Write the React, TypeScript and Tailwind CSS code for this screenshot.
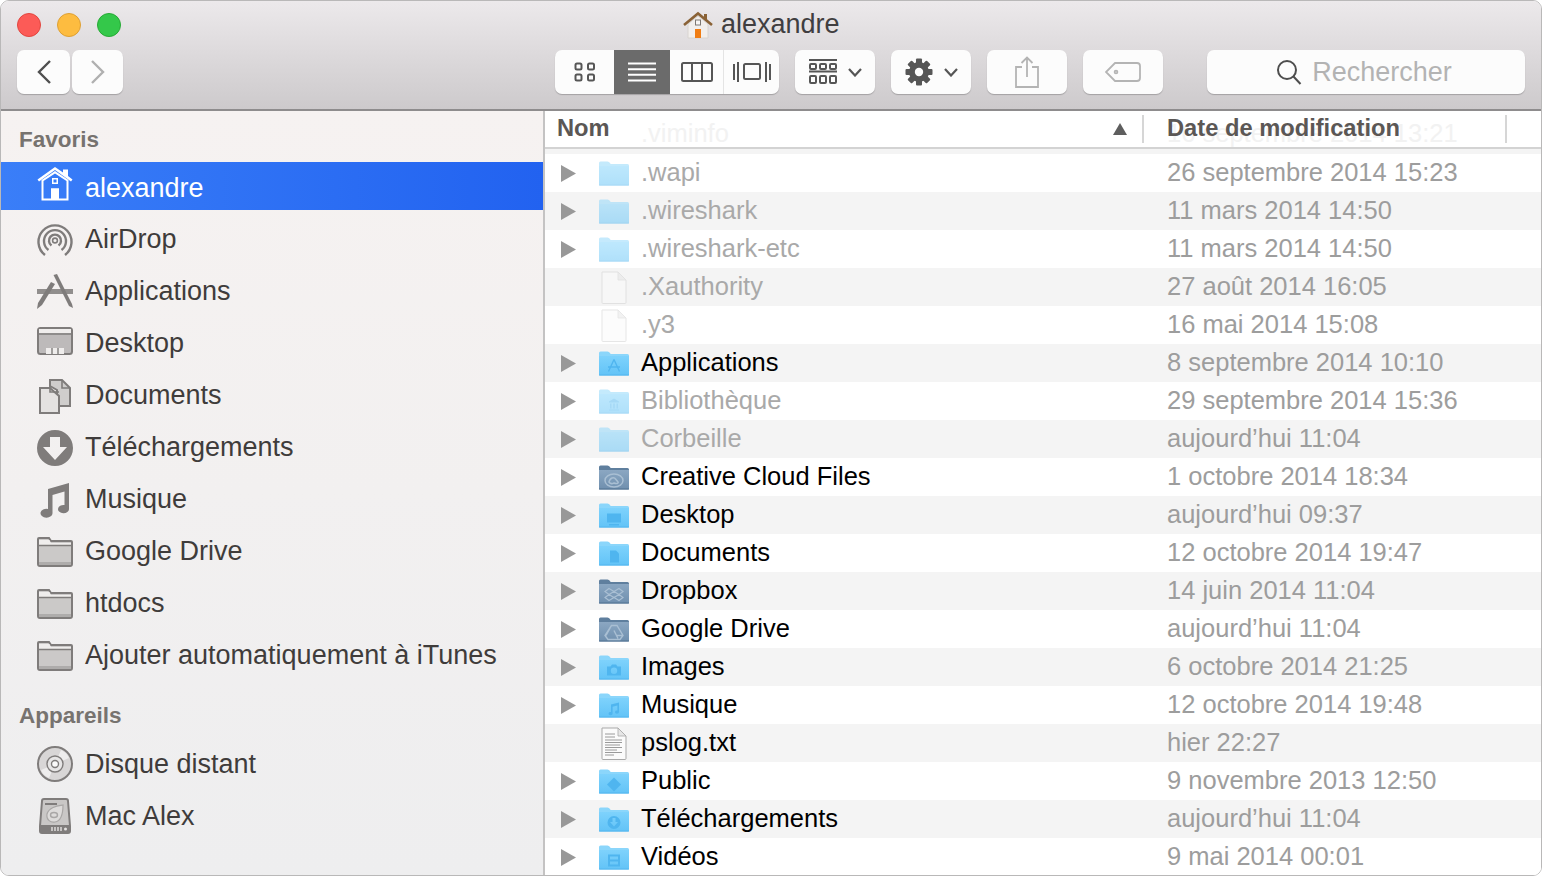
import { useId, type ReactNode } from "react";

const FONT = "font-['Liberation_Sans',Arial,sans-serif]";
const GRAY = "#7f7c7b";

type Glyph = "apps" | "library" | "cloud" | "desktop" | "doc" | "dropbox" | "drive" | "camera" | "music" | "public" | "download" | "film";

type Row = {
  name: string;
  date: string;
  icon: "folder" | "slate" | "file" | "text";
  glyph?: Glyph;
  faded?: boolean;
  noArrow?: boolean;
};

const rows: Row[] = [
  { name: ".wapi", date: "26 septembre 2014 15:23", icon: "folder", faded: true },
  { name: ".wireshark", date: "11 mars 2014 14:50", icon: "folder", faded: true },
  { name: ".wireshark-etc", date: "11 mars 2014 14:50", icon: "folder", faded: true },
  { name: ".Xauthority", date: "27 août 2014 16:05", icon: "file", faded: true, noArrow: true },
  { name: ".y3", date: "16 mai 2014 15:08", icon: "file", faded: true, noArrow: true },
  { name: "Applications", date: "8 septembre 2014 10:10", icon: "folder", glyph: "apps" },
  { name: "Bibliothèque", date: "29 septembre 2014 15:36", icon: "folder", glyph: "library", faded: true },
  { name: "Corbeille", date: "aujourd’hui 11:04", icon: "folder", faded: true },
  { name: "Creative Cloud Files", date: "1 octobre 2014 18:34", icon: "slate", glyph: "cloud" },
  { name: "Desktop", date: "aujourd’hui 09:37", icon: "folder", glyph: "desktop" },
  { name: "Documents", date: "12 octobre 2014 19:47", icon: "folder", glyph: "doc" },
  { name: "Dropbox", date: "14 juin 2014 11:04", icon: "slate", glyph: "dropbox" },
  { name: "Google Drive", date: "aujourd’hui 11:04", icon: "slate", glyph: "drive" },
  { name: "Images", date: "6 octobre 2014 21:25", icon: "folder", glyph: "camera" },
  { name: "Musique", date: "12 octobre 2014 19:48", icon: "folder", glyph: "music" },
  { name: "pslog.txt", date: "hier 22:27", icon: "text", noArrow: true },
  { name: "Public", date: "9 novembre 2013 12:50", icon: "folder", glyph: "public" },
  { name: "Téléchargements", date: "aujourd’hui 11:04", icon: "folder", glyph: "download" },
  { name: "Vidéos", date: "9 mai 2014 00:01", icon: "folder", glyph: "film" },
];

function FolderGlyph({ glyph, c }: { glyph: Glyph; c: string }) {
  switch (glyph) {
    case "apps":
      return <path d="M15 8 L9.5 20 M15 8 L20.5 20 M9 15.5 H21" stroke={c} strokeWidth="1.4" fill="none" />;
    case "library":
      return <path d="M10 12 L15 9 L20 12 V13 H10 Z M11 14 H12.5 V19 H11 Z M14.2 14 H15.8 V19 H14.2 Z M17.5 14 H19 V19 H17.5 Z M10 20 H20 V21 H10 Z" fill={c} />;
    case "cloud":
      return (
        <g fill="none" stroke={c} strokeWidth="1.5">
          <ellipse cx="15" cy="15" rx="9" ry="6.5" />
          <path d="M10 16.5 C11 12 15 11 17 14 L19 16.5 C20 18 17 18.5 15 17.5 C13 18.5 11 18 10 16.5 Z" />
        </g>
      );
    case "desktop":
      return <path d="M8 10 H22 V19 H8 Z M10 20.5 H20 V22 H10 Z" fill={c} />;
    case "doc":
      return <path d="M11 9 H17 L20 12 V21 H11 Z" fill={c} />;
    case "dropbox":
      return <path d="M10 9 L15 12 L10 15 L15 18 L20 15 L15 12 L20 9 L24 12 L20 15 L24 18 L20 21 L15 18 L10 21 L6 18 L10 15 L6 12 Z" fill="none" stroke={c} strokeWidth="1.2" />;
    case "drive":
      return <path d="M12.5 8 H18 L24 18 L21 22 H9 L6 18 Z M12.5 8 L7 18 M18 18 H24 M15 13 L19 21" fill="none" stroke={c} strokeWidth="1.4" />;
    case "camera":
      return <path fillRule="evenodd" d="M8 11 H11.5 L13 9 H17 L18.5 11 H22 V20 H8 Z M15 12 A3.2 3.2 0 1 0 15 18.4 A3.2 3.2 0 1 0 15 12 Z" fill={c} />;
    case "music":
      return <path d="M12 11 L20 9 V18.5 A2 1.6 0 1 1 18.4 17 V12 L13.6 13.2 V20 A2 1.6 0 1 1 12 18.5 Z" fill={c} />;
    case "public":
      return <path d="M15 8 L22 15 L15 22 L8 15 Z" fill={c} />;
    case "download":
      return <path fillRule="evenodd" d="M15 8.5 A6.5 6.5 0 1 0 15 21.5 A6.5 6.5 0 1 0 15 8.5 Z M13.5 10.5 H16.5 V14.5 H19 L15 19 L11 14.5 H13.5 Z" fill={c} />;
    case "film":
      return <path fillRule="evenodd" d="M9 9 H21 V21 H9 Z M11 11 V14 H19 V11 Z M11 16 V19 H19 V16 Z" fill={c} />;
  }
}

function Folder({ slate, glyph }: { slate?: boolean; glyph?: Glyph }) {
  const id = useId();
  const top = slate ? "#8ba7c2" : "#7ed2fc";
  const bottom = slate ? "#6f8fae" : "#62c3f7";
  const tab = slate ? "#5f7f9e" : "#8bd6fb";
  const edge = slate ? "#51708f" : "#55b6ee";
  return (
    <svg width="32" height="25" viewBox="0 0 32 25" className="block">
      <defs>
        <linearGradient id={id} x1="0" y1="0" x2="0" y2="1">
          <stop offset="0" stopColor={top} />
          <stop offset="1" stopColor={bottom} />
        </linearGradient>
      </defs>
      <path d="M1 24 V2 Q1 0.5 2.5 0.5 H9.5 Q11 0.5 12 2 L12.6 3 H29.5 Q31 3 31 4.5 V24 Z" fill={tab} />
      <path d="M1 5 H31 V23.5 Q31 24.5 30 24.5 H2 Q1 24.5 1 23.5 Z" fill={`url(#${id})`} />
      <path d="M1 24 H31" stroke={edge} strokeWidth="1" />
      <g transform="translate(1 0.5)">
        {glyph && <FolderGlyph glyph={glyph} c={slate ? "#a9bfd3" : "#4fb5ef"} />}
      </g>
    </svg>
  );
}

function FileIcon({ text }: { text?: boolean }) {
  return (
    <svg width="26" height="33" viewBox="0 0 26 33" className="block">
      <path d="M1 1 H17 L25 9 V31.5 Q25 32.5 24 32.5 H2 Q1 32.5 1 31.5 Z" fill="#fbfbfb" stroke={text ? "#a9a9a9" : "#cfcfcf"} />
      <path d="M17 1 V9 H25 Z" fill="#e6e6e6" stroke={text ? "#a9a9a9" : "#cfcfcf"} strokeWidth="0.8" />
      {text && (
        <path
          d="M4 7 H14 M4 10 H14 M4 13 H21 M4 15.5 H21 M4 18 H19 M4 20.5 H21 M4 23 H16 M4 25.5 H21 M4 28 H13"
          stroke="#9a9a9a"
          strokeWidth="1"
        />
      )}
    </svg>
  );
}

function RowIcon({ row }: { row: Row }) {
  if (row.icon === "folder") return <Folder glyph={row.glyph} />;
  if (row.icon === "slate") return <Folder slate glyph={row.glyph} />;
  return (
    <div className="pl-[3px]">
      <FileIcon text={row.icon === "text"} />
    </div>
  );
}

function HomeIcon() {
  return (
    <svg width="36" height="36" viewBox="0 0 36 36" className="block">
      <path d="M0.5 13.5 L18 1 L26 6.5 V3.5 H31 V10 L35.5 13.5 L34 15.5 L18 4 L2 15.5 Z" fill="#fff" />
      <path fillRule="evenodd" d="M4.5 14 L18 5 L31.5 14 V34.5 H4.5 Z M6.5 15 V32.5 H14 V22.5 H22 V32.5 H29.5 V15 L18 7.5 Z M15 12 V18 H21 V12 Z M16.5 13.5 H19.5 V16.5 H16.5 Z" fill="#fff" />
      <rect x="14" y="22.5" width="8" height="11" fill="#fff" />
    </svg>
  );
}

function SideIcon({ kind }: { kind: string }) {
  const common = { width: 36, height: 36, viewBox: "0 0 36 36", className: "block" };
  switch (kind) {
    case "airdrop":
      return (
        <svg {...common}>
          <g fill="none" stroke={GRAY} strokeWidth="2.4">
            <path d="M8 33 A16.5 16.5 0 1 1 28 33" />
            <path d="M11.5 28 A11 11 0 1 1 24.5 28" />
            <path d="M14.5 23.5 A6 6 0 1 1 21.5 23.5" />
          </g>
          <circle cx="18" cy="18.5" r="2.4" fill="none" stroke={GRAY} strokeWidth="1.6" />
        </svg>
      );
    case "apps":
      return (
        <svg {...common}>
          <rect x="0" y="15" width="36" height="5" fill={GRAY} opacity="0.85" />
          <path d="M16.5 1 L20 0 L35 30 L36 34 L32 32 Z" fill={GRAY} />
          <path d="M14 8 L18 10 L5 31 L0 35 L1 29 Z" fill={GRAY} />
        </svg>
      );
    case "desktop":
      return (
        <svg {...common}>
          <rect x="1" y="2" width="34" height="26" rx="2.5" fill="#bdbaba" stroke={GRAY} strokeWidth="2" />
          <rect x="2" y="3" width="32" height="4" fill="#efedec" />
          <path d="M1 8 H35" stroke={GRAY} strokeWidth="1.5" />
          <rect x="9" y="22" width="18" height="6" fill="#efedec" />
          <path d="M15 22 V28 M21 22 V28" stroke={GRAY} strokeWidth="1.4" />
        </svg>
      );
    case "docs":
      return (
        <svg {...common}>
          <path d="M13 2 H25 L33 10 V28 H20 V12 L13 8 Z" fill="#cfcdcc" stroke={GRAY} strokeWidth="2" />
          <path d="M3 10 H13 L22 18 V35 H3 Z" fill="#e4e2e1" stroke={GRAY} strokeWidth="2" />
          <path d="M13 3 V14 H22 M25 2 V10 H33" fill="none" stroke={GRAY} strokeWidth="1.6" />
        </svg>
      );
    case "download":
      return (
        <svg {...common}>
          <path fillRule="evenodd" d="M18 0 A18 18 0 1 0 18 36 A18 18 0 1 0 18 0 Z M13 7 H23 V17 H30 L18 30 L6 17 H13 Z" fill={GRAY} />
        </svg>
      );
    case "music":
      return (
        <svg {...common}>
          <path d="M11 7 L32 1 V27 A5.5 4.2 0 1 1 27.5 23 V9.5 L15.5 13 V31 A6 4.4 0 1 1 11 27 Z" fill={GRAY} />
        </svg>
      );
    case "folder":
      return (
        <svg {...common}>
          <path d="M1 30 V5 Q1 4 2 4 H12 L14 7 H34 Q35 7 35 8 V30 Q35 32 33 32 H3 Q1 32 1 30 Z" fill="#cbc9c8" stroke={GRAY} strokeWidth="2" />
          <path d="M2 6 H12.5 L14 9 H34 V11 H2 Z" fill="#efedec" />
          <path d="M2 11.5 H34" stroke={GRAY} strokeWidth="1.5" />
          <rect x="2" y="28" width="32" height="3" fill="#aeacab" />
        </svg>
      );
    case "disc":
      return (
        <svg {...common}>
          <circle cx="18" cy="18" r="17" fill="#d8d6d6" stroke={GRAY} strokeWidth="2" />
          <path d="M18 18 L24 4 A15 15 0 0 1 32 12 Z M18 18 L12 32 A15 15 0 0 1 4 24 Z" fill="#eeeded" />
          <circle cx="18" cy="18" r="8" fill="#e7e6e6" stroke={GRAY} strokeWidth="1.4" />
          <circle cx="18" cy="18" r="3.5" fill="#fafafa" stroke={GRAY} strokeWidth="1.4" />
        </svg>
      );
    default:
      return (
        <svg {...common}>
          <path d="M5 3 Q5 1 7 1 H29 Q31 1 31 3 L33 28 V33 Q33 35 31 35 H5 Q3 35 3 33 V28 Z" fill="#c9c7c6" stroke={GRAY} strokeWidth="2" />
          <path d="M8 6 H20" stroke={GRAY} strokeWidth="2" />
          <path d="M3 27 H33 V33 Q33 35 31 35 H5 Q3 35 3 33 Z" fill={GRAY} />
          <path d="M15 29 V33 M18 29 V33 M21 29 V33 M24 29 V33" stroke="#e4e2e1" strokeWidth="1.4" />
          <circle cx="28.5" cy="31" r="1.5" fill="#e4e2e1" />
          <path d="M26 7 C20 8 12 9 10 16 C9 22 14 25 18 24 C24 23 26 17 26 7 Z" fill="#dddbda" stroke="#a9a7a6" strokeWidth="1.2" />
          <ellipse cx="17" cy="17" rx="3.5" ry="2.5" fill="none" stroke="#a9a7a6" strokeWidth="1.4" />
        </svg>
      );
  }
}

function SideItem({ icon, label }: { icon: string; label: string }) {
  return (
    <div className="flex h-[52px] items-center pl-[36px] pr-2">
      <div className="w-[48px] shrink-0">
        <SideIcon kind={icon} />
      </div>
      <span className="text-[27px] leading-none whitespace-nowrap text-[#3f3c3b]">{label}</span>
    </div>
  );
}

function SectionLabel({ children }: { children: ReactNode }) {
  return <div className="pl-[18px] text-[22.5px] font-bold leading-none text-[#77736f]">{children}</div>;
}

function ToolButton({ children, className = "" }: { children: ReactNode; className?: string }) {
  return (
    <div className={`flex h-[44px] items-center justify-center rounded-[7px] bg-[#fcfcfc] shadow-[0_1px_1px_rgba(0,0,0,0.22)] ${className}`}>
      {children}
    </div>
  );
}

const DARK = "#565656";

function Chevron() {
  return (
    <svg width="14" height="9" viewBox="0 0 14 9">
      <path d="M1 1 L7 7.5 L13 1" fill="none" stroke={DARK} strokeWidth="2.2" />
    </svg>
  );
}

function Gear() {
  const teeth = [0, 45, 90, 135];
  return (
    <svg width="28" height="28" viewBox="0 0 28 28">
      {teeth.map((a) => (
        <rect key={a} x="11" y="0.5" width="6" height="27" rx="1" fill={DARK} transform={`rotate(${a} 14 14)`} />
      ))}
      <circle cx="14" cy="14" r="10" fill={DARK} />
      <circle cx="14" cy="14" r="4.2" fill="#fcfcfc" />
    </svg>
  );
}

function ViewSegment({ width, dark, children }: { width: string; dark?: boolean; children: ReactNode }) {
  return (
    <div className={`flex h-full items-center justify-center ${width} ${dark ? "bg-[#6b6b6b]" : ""}`}>{children}</div>
  );
}

function Toolbar() {
  return (
    <div className="h-[110px] shrink-0 border-b-2 border-[#8e8c8d] bg-gradient-to-b from-[#ece9eb] to-[#cdcacc]">
      <div className="relative flex h-[47px] items-center pl-[16px]">
        <div className="flex gap-[16px]">
          <div className="h-6 w-6 rounded-full border border-[#e2463f] bg-[#fc5b57]" />
          <div className="h-6 w-6 rounded-full border border-[#dea034] bg-[#fdbc40]" />
          <div className="h-6 w-6 rounded-full border border-[#27aa35] bg-[#34c84a]" />
        </div>
        <div className="ml-[562px] flex items-center gap-[8px]">
          <svg width="30" height="28" viewBox="0 0 30 28">
            <path d="M5 13 L15 5 L25 13 V27 H5 Z" fill="#f2efec" stroke="#d8d4d0" />
            <path d="M1 14 L15 2.5 L29 14" fill="none" stroke="#8a6236" strokeWidth="2.6" />
            <rect x="21" y="3" width="3" height="6" fill="#8a6236" />
            <rect x="12.5" y="9" width="5" height="5" fill="#f8f6f4" stroke="#7d7873" />
            <rect x="12" y="18" width="6" height="9" fill="#f07d13" />
          </svg>
          <span className="text-[27px] leading-none text-[#403e40]">alexandre</span>
        </div>
      </div>
      <div className="flex items-start pl-[16px] pt-[2px]">
        <div className="flex gap-[2px]">
          <ToolButton className="w-[53px]">
            <svg width="16" height="26" viewBox="0 0 16 26">
              <path d="M14 2 L3 13 L14 24" fill="none" stroke="#4f4f4f" strokeWidth="2.4" />
            </svg>
          </ToolButton>
          <ToolButton className="w-[51px]">
            <svg width="16" height="26" viewBox="0 0 16 26">
              <path d="M2 2 L13 13 L2 24" fill="none" stroke="#b0b0b0" strokeWidth="2.4" />
            </svg>
          </ToolButton>
        </div>
        <ToolButton className="ml-[432px] w-[224px] overflow-hidden">
          <ViewSegment width="w-[59px]">
            <svg width="22" height="20" viewBox="0 0 22 20" fill="none" stroke={DARK} strokeWidth="2">
              <rect x="1.5" y="1.5" width="6" height="6" rx="1.5" />
              <rect x="14" y="1.5" width="6" height="6" rx="1.5" />
              <rect x="1.5" y="12.5" width="6" height="6" rx="1.5" />
              <rect x="14" y="12.5" width="6" height="6" rx="1.5" />
            </svg>
          </ViewSegment>
          <ViewSegment width="w-[56px]" dark>
            <svg width="28" height="20" viewBox="0 0 28 20" stroke="#fff" strokeWidth="2">
              <path d="M0 1.5 H28 M0 7.2 H28 M0 12.8 H28 M0 18.5 H28" />
            </svg>
          </ViewSegment>
          <ViewSegment width="w-[53px]">
            <svg width="32" height="20" viewBox="0 0 32 20" fill="none" stroke={DARK} strokeWidth="2">
              <rect x="1" y="1" width="30" height="18" rx="1.5" />
              <path d="M11 1 V19 M21 1 V19" />
            </svg>
          </ViewSegment>
          <div className="h-full w-px bg-[#e4e4e4]" />
          <ViewSegment width="flex-1">
            <svg width="38" height="22" viewBox="0 0 38 22" fill="none" stroke={DARK} strokeWidth="2">
              <rect x="11" y="3" width="16" height="15" rx="1.5" />
              <path d="M1 3 V19 M5 1 V21 M33 1 V21 M37 3 V19" />
            </svg>
          </ViewSegment>
        </ToolButton>
        <ToolButton className="ml-[16px] w-[80px] gap-[11px]">
          <svg width="28" height="26" viewBox="0 0 28 26" fill="none" stroke={DARK} strokeWidth="2">
            <path d="M0 1 H28 M0 12.5 H28" />
            <rect x="1" y="5" width="6" height="5" rx="1" />
            <rect x="11" y="5" width="6" height="5" rx="1" />
            <rect x="21" y="5" width="6" height="5" rx="1" />
            <rect x="1" y="17" width="6" height="7" rx="1" />
            <rect x="11" y="17" width="6" height="7" rx="1" />
            <rect x="21" y="17" width="6" height="7" rx="1" />
          </svg>
          <Chevron />
        </ToolButton>
        <ToolButton className="ml-[16px] w-[80px] gap-[11px]">
          <Gear />
          <Chevron />
        </ToolButton>
        <ToolButton className="ml-[16px] w-[80px]">
          <svg width="24" height="32" viewBox="0 0 24 32" fill="none" stroke="#b4b4b4" strokeWidth="1.8">
            <path d="M7 11 H1 V31 H23 V11 H17 M12 21 V2 M6.5 7 L12 1.5 L17.5 7" />
          </svg>
        </ToolButton>
        <ToolButton className="ml-[16px] w-[80px]">
          <svg width="36" height="20" viewBox="0 0 36 20" fill="none" stroke="#b4b4b4" strokeWidth="1.8">
            <path d="M10 1 H32 Q35 1 35 4 V16 Q35 19 32 19 H10 L1 10 Z" />
            <circle cx="11" cy="10" r="1.4" />
          </svg>
        </ToolButton>
        <ToolButton className="ml-[44px] w-[318px] gap-[10px] pr-[4px]">
          <svg width="26" height="26" viewBox="0 0 26 26" fill="none" stroke="#4e4e4e" strokeWidth="2">
            <circle cx="11" cy="11" r="9" />
            <path d="M17.5 17.5 L24.5 25" />
          </svg>
          <span className="text-[27px] leading-none text-[#b3b3b3]">Rechercher</span>
        </ToolButton>
      </div>
    </div>
  );
}

function Sidebar() {
  return (
    <div className="w-[544px] shrink-0 overflow-hidden border-r-2 border-[#c4c3c3] bg-gradient-to-b from-[#f6f2f1] to-[#eeeeef] pt-[18px]">
      <SectionLabel>Favoris</SectionLabel>
      <div className="mt-[10px] flex h-[48px] items-center bg-gradient-to-r from-[#3a7ef8] to-[#2262f0] pl-[36px] pt-[6px]">
        <div className="-mt-[9px] w-[48px] shrink-0">
          <HomeIcon />
        </div>
        <span className="text-[27px] leading-none text-white">alexandre</span>
      </div>
      <div className="mt-[4px]">
        <SideItem icon="airdrop" label="AirDrop" />
        <SideItem icon="apps" label="Applications" />
        <SideItem icon="desktop" label="Desktop" />
        <SideItem icon="docs" label="Documents" />
        <SideItem icon="download" label="Téléchargements" />
        <SideItem icon="music" label="Musique" />
        <SideItem icon="folder" label="Google Drive" />
        <SideItem icon="folder" label="htdocs" />
        <SideItem icon="folder" label="Ajouter automatiquement à iTunes" />
      </div>
      <div className="mt-[23px]">
        <SectionLabel>Appareils</SectionLabel>
      </div>
      <div className="mt-[11px]">
        <SideItem icon="disc" label="Disque distant" />
        <SideItem icon="hd" label="Mac Alex" />
      </div>
    </div>
  );
}

function FileList() {
  return (
    <div className="min-w-0 flex-1 bg-white">
      <div className="relative h-[38px] overflow-hidden border-b-2 border-[#d3d3d3]">
        <span className="absolute left-[96px] top-[10px] text-[25.5px] leading-none text-[#f2f2f2]">.viminfo</span>
        <span className="absolute left-[622px] top-[10px] text-[25.5px] leading-none whitespace-nowrap text-[#f2f2f2]">16 septembre 2014 13:21</span>
        <div className="relative flex h-full items-center text-[23.7px] font-bold leading-none text-[#5b5755]">
          <span className="ml-[12px] w-[556px]">Nom</span>
          <svg width="14" height="12" viewBox="0 0 14 12" className="shrink-0">
            <path d="M7 0 L14 12 H0 Z" fill="#5e5e5e" />
          </svg>
          <div className="ml-[15px] h-[28px] w-[2px] shrink-0 bg-[#d6d6d6]" />
          <span className="ml-[23px] w-[338px] whitespace-nowrap">Date de modification</span>
          <div className="h-[28px] w-[2px] shrink-0 bg-[#d6d6d6]" />
        </div>
      </div>
      <div className="h-[5px] bg-[#f4f4f4]" />
      {rows.map((row, i) => (
        <div
          key={row.name}
          className={`flex h-[38px] items-center text-[25.5px] leading-none ${i % 2 === 1 ? "bg-[#f4f4f4]" : "bg-white"}`}
        >
          <div className="w-[53px] shrink-0 pl-[16px]">
            {!row.noArrow && (
              <svg width="15" height="17" viewBox="0 0 15 17" className="block">
                <path d="M0 0 L15 8.5 L0 17 Z" fill="#989898" />
              </svg>
            )}
          </div>
          <div className={`w-[43px] shrink-0 ${row.faded ? "opacity-50" : ""}`}>
            <RowIcon row={row} />
          </div>
          <span className={`w-[526px] shrink-0 whitespace-nowrap ${row.faded ? "text-[#a9a9a9]" : "text-black"}`}>{row.name}</span>
          <span className="whitespace-nowrap text-[#9d9d9d]">{row.date}</span>
        </div>
      ))}
    </div>
  );
}

export default function App() {
  return (
    <div className={`h-[876px] w-[1542px] overflow-hidden bg-white ${FONT}`}>
      <div className="flex h-full flex-col overflow-hidden rounded-[9px] border border-[#b9b8b8]">
        <Toolbar />
        <div className="flex min-h-0 flex-1">
          <Sidebar />
          <FileList />
        </div>
      </div>
    </div>
  );
}
